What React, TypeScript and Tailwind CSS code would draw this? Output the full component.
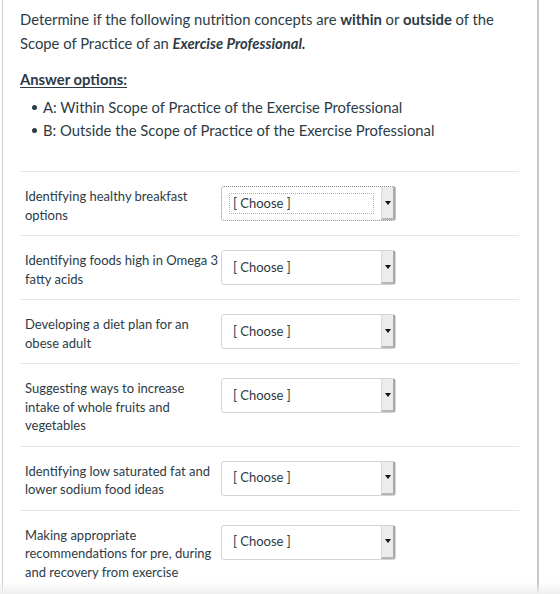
import React from 'react';

const rows: { lines: string[]; focused?: boolean }[] = [
  { lines: ['Identifying healthy breakfast', 'options'], focused: true },
  { lines: ['Identifying foods high in Omega 3', 'fatty acids'] },
  { lines: ['Developing a diet plan for an', 'obese adult'] },
  { lines: ['Suggesting ways to increase', 'intake of whole fruits and', 'vegetables'] },
  { lines: ['Identifying low saturated fat and', 'lower sodium food ideas'] },
  { lines: ['Making appropriate', 'recommendations for pre, during', 'and recovery from exercise'] },
];

const ChooseSelect: React.FC<{ focused?: boolean }> = ({ focused }) => (
  <div
    className={
      'flex h-[35px] w-[175px] shrink-0 items-stretch rounded-[3px] bg-white ' +
      (focused ? 'border border-dotted border-[#8a8a8a]' : 'border border-[#d4d4d4]')
    }
  >
    <div className="flex flex-1 items-center pl-[7px] pr-[7px]">
      <span
        className={
          'flex h-[21px] w-full items-center pl-[3px] text-[13px] text-[#2d3b45] ' +
          (focused ? 'border border-dotted border-[#b0b0b0]' : 'border border-transparent')
        }
      >
        [ Choose ]
      </span>
    </div>
    <div className="flex w-[14px] items-center justify-center border-l border-[#dcdcdc] border-r-2 border-r-[#a9a9a9] border-b-2 border-b-[#b5b5b5] bg-[#ececec]">
      <span className="h-0 w-0 border-l-[3px] border-r-[3px] border-t-[4px] border-l-transparent border-r-transparent border-t-[#111]" />
    </div>
  </div>
);

export default function App() {
  return (
    <div className="relative h-[594px] w-[560px] overflow-hidden bg-white text-[#2d3b45]" style={{ fontFamily: 'Lato, "Open Sans", sans-serif' }}>
      <div className="ml-[2px] h-full w-[537px] border-l border-r-2 border-l-[#c9cdd0] border-r-[#c6c6c6] pl-[17px] pr-[18px] pt-[7px]">
        <p className="text-[14.8px] leading-[24px]">
          Determine if the following nutrition concepts are <strong className="font-bold">within</strong> or{' '}
          <strong className="font-bold">outside</strong> of the Scope of Practice of an{' '}
          <em className="font-bold italic">Exercise Professional.</em>
        </p>
        <p className="mt-[12px] text-[14.8px] font-bold leading-[24px] underline underline-offset-2">Answer options:</p>
        <ul className="mt-[5px] pl-[12px] text-[14.8px] leading-[23px]">
          <li className="flex items-center gap-[6px]">
            <span className="h-[5px] w-[5px] rounded-full bg-[#2d3b45]" />
            A: Within Scope of Practice of the Exercise Professional
          </li>
          <li className="flex items-center gap-[6px]">
            <span className="h-[5px] w-[5px] rounded-full bg-[#2d3b45]" />
            B: Outside the Scope of Practice of the Exercise Professional
          </li>
        </ul>

        <div className="mt-[29px] border-t border-[#e5e5e5]">
          {rows.map((row, i) => (
            <div key={i} className="flex items-start border-b border-[#e5e5e5] pb-[11px] pl-[5px] pt-[14px] last:border-b-0">
              <div className="w-[196px] shrink-0 pr-[4px] pt-[1px] text-[13px] leading-[18.5px]">
                {row.lines.map((l, j) => (
                  <div key={j} className="whitespace-nowrap">
                    {l}
                  </div>
                ))}
              </div>
              <div className="mb-[3px]">
                <ChooseSelect focused={row.focused} />
              </div>
            </div>
          ))}
        </div>
      </div>
      <div className="pointer-events-none absolute bottom-0 left-0 h-[12px] w-full bg-gradient-to-b from-transparent to-[#efefef]" />
    </div>
  );
}
